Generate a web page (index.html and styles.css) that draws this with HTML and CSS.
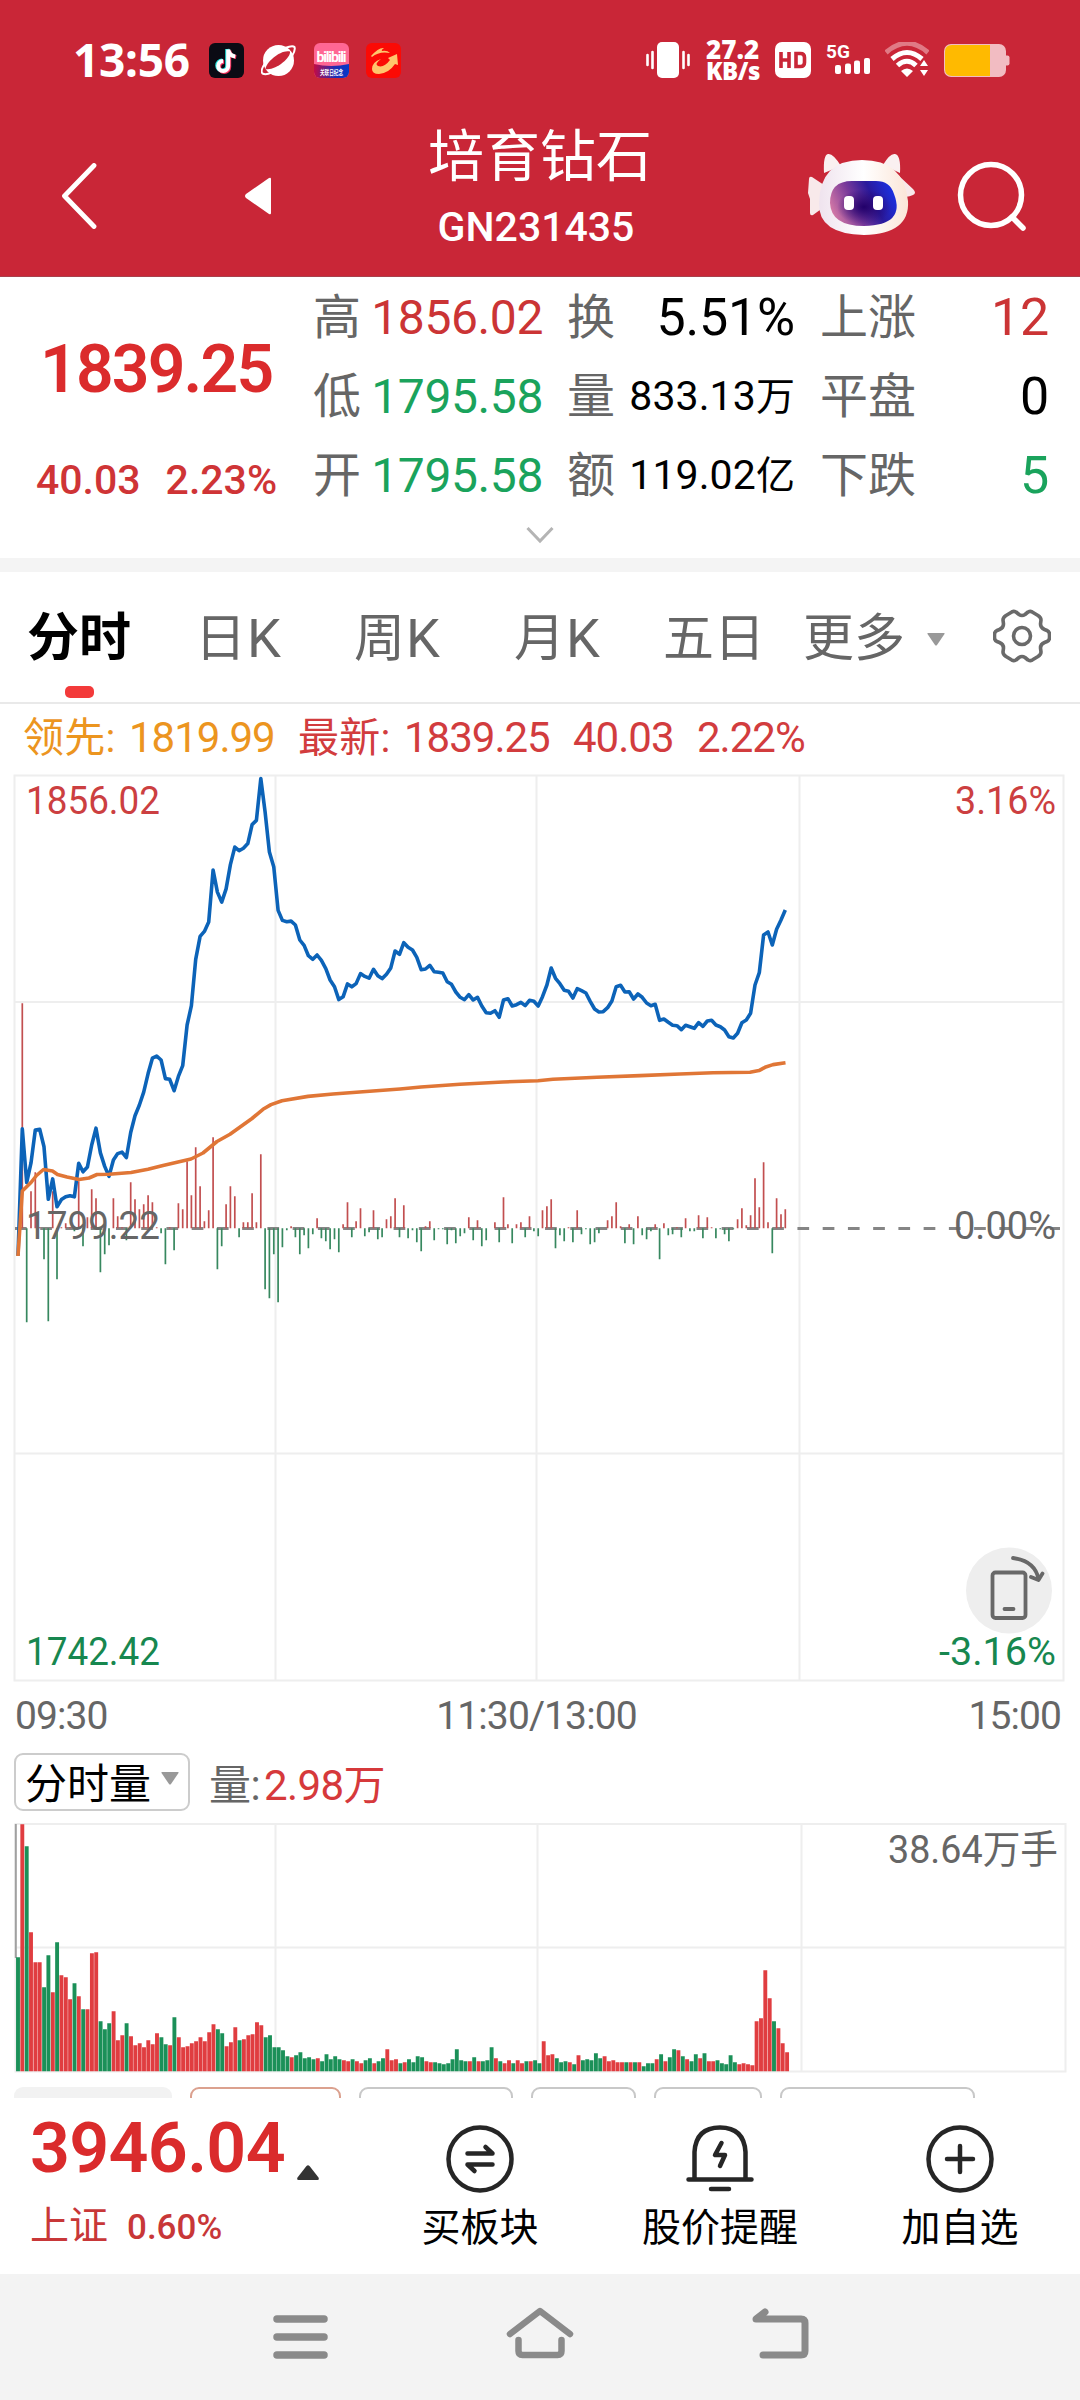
FILE: index.html
```html
<!DOCTYPE html>
<html lang="zh-CN">
<head>
<meta charset="utf-8">
<title>培育钻石 GN231435</title>
<link rel="stylesheet" href="styles.css">
</head>
<body>
<header class="header">
  <div class="status">
    <div class="status-left">
      <span class="clock">13:56</span>
      <svg class="app" viewBox="0 0 35 35"><rect width="35" height="35" rx="6" fill="#0b0b14"/><g fill="none" stroke-width="4"><path d="M18.2 6v16.5a5 5 0 1 1-5-5M18.2 6c.6 4 3.200 6.500 7 7" stroke="#25e5df"/><path d="M20.200 7.500v16.500a5 5 0 1 1-5-5M20.200 7.500c.6 4 3.200 6 7 6.500" stroke="#f5315c"/><path d="M19.200 6.500v16.500a5 5 0 1 1-5-5M19.200 6.500c.6 4 3.200 6.500 7 7" stroke="#fff"/></g></svg>
      <svg class="app" viewBox="0 0 35 35"><circle cx="17.500" cy="17.500" r="15.500" fill="#fff"/><path d="M4.500 26C5 19 20 6 29 8.500C30 15 14 28 4.500 26z" fill="#c92637"/><path d="M3.500 21C1 25 0 29 1.500 30.500c3 1.500 6 .5 9-1M24 5c4-1.500 8-2.500 9.500-1 1 3-.5 6-2.500 9" fill="none" stroke="#fff" stroke-width="2"/></svg>
      <svg class="app" viewBox="0 0 35 35"><defs><linearGradient id="bl"><stop stop-color="#c40b45"/><stop offset=".6" stop-color="#1d2eb5"/><stop offset="1" stop-color="#0738c8"/></linearGradient><clipPath id="bc"><rect width="35" height="35" rx="6"/></clipPath></defs><g clip-path="url(#bc)"><path d="M0 0h35v35H0z" fill="#ff6794"/><path d="M0 21q17 4 35 0v14H0z" fill="url(#bl)"/><text x="2.500" y="19" class="bili" textLength="30">bilibili</text><text x="6" y="31.500" class="bili-sub" textLength="23" lengthAdjust="spacingAndGlyphs">关联日纪念</text></g></svg>
      <svg class="app" viewBox="0 0 35 35"><rect width="35" height="35" rx="6" fill="#fb0a05"/><path d="M5 13q8-9 13-8-3 2-2 3 5-1 8 2-11-2-18 4zM31 11l-9 4 2 2q-6 8-12 6-4-2 3-7-9 3-9 10 0 5 7 5 10-1 16-10l3 1z" fill="#ffc56c"/></svg>
    </div>
    <div class="status-right">
      <svg width="44" height="36" viewBox="0 0 44 36"><rect x="11" width="22" height="36" rx="5" fill="#fff"/><path d="M1.500 13v10M6.500 10v16M37.500 10v16M42.500 13v10" stroke="#fff" stroke-width="2.600" stroke-linecap="round"/></svg>
      <span class="speed"><b>27.2</b><b>KB/s</b></span>
      <svg width="36" height="36" viewBox="0 0 36 36"><rect width="36" height="36" rx="7" fill="#fff"/><path d="M6 10v16M14 10v16M6 18h8M21 11.500h4.500q4 0 4 4v5q0 4-4 4H21z" fill="none" stroke="#c92637" stroke-width="3.600"/></svg>
      <svg class="signal" width="44" height="36" viewBox="0 0 44 36"><text x="0" y="16" class="five-g">5G</text><g fill="#fff"><rect x="9" y="23" width="6" height="9" rx="2"/><rect x="19" y="21.500" width="6" height="10.500" rx="2"/><rect x="28" y="18.500" width="6" height="13.500" rx="2"/><rect x="38" y="16" width="6" height="16" rx="2"/></g></svg>
      <svg width="44" height="36" viewBox="0 0 44 36"><g fill="none" stroke="#fff" stroke-width="5"><path d="M1 10.500Q22-8 43 10.500" stroke="#e07a85"/><path d="M7 17Q22 4 37 17"/><path d="M12.500 23.500Q22 15 31 23.500"/></g><path d="M16 29q6-5 12 0l-6 6zM35 24h8l-4-6zM35 28h8l-4 6z" fill="#fff"/></svg>
      <svg width="66" height="33" viewBox="0 0 66 33"><rect width="62" height="33" rx="7" fill="#f2bcc2"/><path d="M61 11.500h2.500q2 0 2 2v6q0 2-2 2H61z" fill="#f2bcc2"/><path d="M46 1H8Q1 1 1 8v17q0 7 7 7h38z" fill="#ffba00"/></svg>
    </div>
  </div>
  <div class="titlebar">
    <svg class="back" width="36" height="66" viewBox="0 0 36 66"><path d="M33 2.500L3.500 33 33 63.500" fill="none" stroke="#fff" stroke-width="4.800" stroke-linecap="round" stroke-linejoin="round"/></svg>
    <svg class="prev" width="28" height="38" viewBox="0 0 28 38"><path d="M27 2v34q0 2-2 1L2 21q-2-2 0-4L25 1q2-1 2 1z" fill="#fff"/></svg>
    <div class="title"><h1>培育钻石</h1><p>GN231435</p></div>
    <svg class="robot" width="108" height="84" viewBox="0 0 108 84">
      <defs><linearGradient id="face" x1="0" y1=".6" x2="1" y2=".3"><stop stop-color="#d479a6"/><stop offset=".35" stop-color="#7a3a9a"/><stop offset=".65" stop-color="#2a1a9c"/><stop offset="1" stop-color="#1a32e6"/></linearGradient><radialGradient id="deep"><stop stop-color="#22006a"/><stop offset="1" stop-color="#22006a" stop-opacity="0"/></radialGradient><linearGradient id="skin"><stop stop-color="#efe3ee"/><stop offset=".5" stop-color="#fff"/><stop offset="1" stop-color="#fbe6d8"/></linearGradient></defs>
      <path d="M1 26q0-3 3-2l12 8v22L5 62q-3 1-3-2V46l-2-6zM90 22l15 14q4 4 0 6-6 3-10 1z" fill="#f8e9ea"/>
      <path d="M16 20Q15 2 20 1q5-1 13 12zM92 20q1-18-5-19-5-1-12 11z" fill="#faf0f0"/>
      <path d="M11 50Q12 7 54 7q42 0 46 41 2 33-44 34Q10 81 11 50z" fill="url(#skin)"/>
      <path d="M22 50q0-22 22-22h24q14 0 18 13 12 31-30 32-33 0-34-23z" fill="url(#face)"/><ellipse cx="56" cy="54" rx="27" ry="18" fill="url(#deep)"/>
      <rect x="36" y="43" width="10" height="14" rx="4" fill="#fff"/><rect x="65" y="43" width="10" height="14" rx="4" fill="#fff"/>
    </svg>
    <svg class="search" width="70" height="70" viewBox="0 0 70 70"><g fill="none" stroke="#fff" stroke-width="5.500" stroke-linecap="round"><circle cx="34" cy="34" r="30.500"/><path d="M55 56l11 11"/></g></svg>
  </div>
</header>

<section class="quote">
  <div class="quote-main"><strong>1839.25</strong><p><span>40.03</span><span>2.23%</span></p></div>
  <dl class="col col-a"><dt>高</dt><dd class="up">1856.02</dd><dt>低</dt><dd class="down">1795.58</dd><dt>开</dt><dd class="down">1795.58</dd></dl>
  <dl class="col col-b"><dt>换</dt><dd class="big">5.51%</dd><dt>量</dt><dd class="small">833.13<i>万</i></dd><dt>额</dt><dd class="small">119.02<i>亿</i></dd></dl>
  <dl class="col col-c"><dt>上涨</dt><dd class="big up">12</dd><dt>平盘</dt><dd class="big">0</dd><dt>下跌</dt><dd class="big down">5</dd></dl>
  <svg class="expand" width="28" height="18" viewBox="0 0 28 18"><path d="M1.500 2L14 15 26.500 2" fill="none" stroke="#b4b4b4" stroke-width="3"/></svg>
</section>

<nav class="tabs">
  <span class="tab active">分时</span><span class="tab">日<b>K</b></span><span class="tab">周<b>K</b></span><span class="tab">月<b>K</b></span><span class="tab">五日</span>
  <span class="tab">更多<svg width="18" height="13" viewBox="0 0 18 13"><path d="M1 0h16q1 0 .5 1L10 12q-1 1-2 0L.5 1Q0 0 1 0z" fill="#999"/></svg></span>
  <svg class="gear" width="58" height="54" viewBox="0 0 58 54"><g fill="none" stroke="#6a6a6a" stroke-width="3.600" stroke-linejoin="round"><path d="M18 3.500Q20 1.500 23 3l3 2.500q3 2 6 0L35 3q3-1.500 5 .5l5 3q3 2 3 4.500l-.5 4q0 4 4 5.500l2.500 1q2.500 1 2.500 4v3q0 3-2.500 4l-2.500 1q-4 1.500-4 5.500l.5 4q0 2.500-3 4.500l-5 3q-2 2-5 .5l-3-2.500q-3-2-6 0L23 51q-3 1.500-5-.5l-5-3q-3-2-3-4.500l.5-4q0-4-4-5.500L4 32.500q-2.500-1-2.500-4v-3q0-3 2.500-4l2.500-1q4-1.500 4-5.500L10 11q0-2.500 3-4.500z"/><circle cx="29" cy="27" r="8.500"/></g></svg>
</nav>

<p class="legend"><span class="lead"><i>领先:</i>1819.99</span><span class="latest"><i>最新:</i>1839.25</span><span class="diff">40.03</span><span>2.22%</span></p>

<section class="price-chart">
  <svg id="price" width="1080" height="908" viewBox="0 774 1080 908">
    <path class="grid" d="M14.500 775.500H1063.500V1680.500H14.500zM14.500 1002H1063.500M14.500 1453.500H1063.500M275.500 775.500V1680.500M536.500 775.500V1680.500M799.500 775.500V1680.500"/>
    <path d="M15 1228.500H1060" stroke="#858585" stroke-width="3" stroke-dasharray="11.700 13.540"/>
    <path id="flow-up" stroke="#c24f50" stroke-width="1.700"/>
    <path id="flow-down" stroke="#37885f" stroke-width="1.700"/>
    <g class="axis">
      <text class="red" x="26" y="814" textLength="134" lengthAdjust="spacingAndGlyphs">1856.02</text>
      <text x="26" y="1239" textLength="134" lengthAdjust="spacingAndGlyphs">1799.22</text>
      <text class="green" x="26" y="1665" textLength="134" lengthAdjust="spacingAndGlyphs">1742.42</text>
      <text class="red" x="955" y="814" textLength="101" lengthAdjust="spacingAndGlyphs">3.16%</text>
      <text x="954" y="1239" textLength="102" lengthAdjust="spacingAndGlyphs">0.00%</text>
      <text class="green" x="939" y="1665" textLength="117" lengthAdjust="spacingAndGlyphs">-3.16%</text>
    </g>
    <path id="line" fill="none" stroke="#0c63b8" stroke-width="3.600" stroke-linejoin="round"/>
    <path id="avg" fill="none" stroke="#e07636" stroke-width="3.600" stroke-linejoin="round"/>
    <g fill="none" stroke="#686868" stroke-width="3.800" stroke-linecap="round" stroke-linejoin="round"><circle cx="1009" cy="1590.500" r="43" fill="#eee" stroke="none"/><rect x="992.500" y="1572.500" width="33" height="45.500" rx="3"/><path d="M1004.500 1609h9M1013 1558q22 3 25.500 21M1031 1577l7.500 3 4-6.500"/></g>
  </svg>
</section>
<div class="times"><span>09:30</span><span>11:30/13:00</span><span>15:00</span></div>
<div class="indicator">
  <span class="select"><em>分时量</em><svg width="18" height="13" viewBox="0 0 18 13"><path d="M1 0h16q1 0 .5 1L10 12q-1 1-2 0L.5 1Q0 0 1 0z" fill="#999"/></svg></span>
  <span class="vol"><i>量:</i>2.98万</span>
</div>
<section class="volume-chart">
  <svg width="1080" height="250" viewBox="0 1823 1080 250">
    <path class="grid" d="M15.500 1824H1065.500V2071.500H15.500zM15.500 1947.500H1065.500M275.500 1824V2071.500M537.500 1824V2071.500M801.500 1824V2071.500"/>
    <path d="M15.800 1824V1958" stroke="#a0a0a0" stroke-width="2"/>
    <path id="vol-up" stroke="#e03d40" stroke-width="3.900"/>
    <path id="vol-down" stroke="#1b9058" stroke-width="3.900"/>
    <text class="unit" x="888" y="1863" textLength="170" lengthAdjust="spacingAndGlyphs">38.64万手</text>
  </svg>
</section>
<div class="chips"><span class="c1"></span><span class="c2"></span><span class="c3"></span><span class="c4"></span><span class="c5"></span><span class="c6"></span></div>

<footer class="actions">
  <div class="index"><strong>3946.04</strong><svg width="22" height="15" viewBox="0 0 22 15"><path d="M9.500 1q1.500-1.500 3 0l9 11.500q1 2.500-1 2.500h-19Q-.5 15 .5 12.500z" fill="#333"/></svg><p><span>上证</span>0.60%</p></div>
  <div class="action"><svg width="68" height="68" viewBox="0 0 68 68"><g fill="none" stroke="#262626" stroke-width="4.500" stroke-linecap="round" stroke-linejoin="round"><circle cx="34" cy="34" r="31.500"/><path d="M21.500 28.500h25l-7-6.500M46.500 39.500h-25l7 6.500"/></g></svg>买板块</div>
  <div class="action"><svg width="68" height="68" viewBox="0 0 68 68"><g fill="none" stroke="#262626" stroke-width="4.500" stroke-linecap="round" stroke-linejoin="round"><path d="M8.500 54V27Q10 2.500 34 2.500T59.500 27v27M2.500 54.500h63M25 64h18"/><path d="M35.500 18l-6.500 12h10l-5 11" /></g></svg>股价提醒</div>
  <div class="action"><svg width="68" height="68" viewBox="0 0 68 68"><g fill="none" stroke="#262626" stroke-width="4.500" stroke-linecap="round"><circle cx="34" cy="34" r="31.500"/><path d="M21 34h26M34 21v26"/></g></svg>加自选</div>
</footer>
<nav class="sysnav">
  <svg width="72" height="60" viewBox="0 0 72 60"><path d="M13 15h47M13 33h47M13 51h47" stroke="#8a8a8a" stroke-width="7.500" stroke-linecap="round"/></svg>
  <svg width="72" height="60" viewBox="0 0 72 60"><g fill="none" stroke="#8a8a8a" stroke-width="6.500" stroke-linecap="round" stroke-linejoin="round"><path d="M6 30L36 7l30 23"/><path d="M14.500 36v11q0 4 4 4h35q4 0 4-4V36"/></g></svg>
  <svg width="72" height="60" viewBox="0 0 72 60"><path d="M19 51h38q4 0 4-4V19q0-4-4-4H12l9-7" fill="none" stroke="#8a8a8a" stroke-width="7" stroke-linecap="round" stroke-linejoin="round"/></svg>
</nav>
<script src="chart.js"></script>
</body>
</html>
```
FILE: styles.css
```css
* { box-sizing: border-box; margin: 0; padding: 0; }
body { width: 1080px; height: 2400px; background: #fff; overflow: hidden; color: #000; font-family: Roboto, "Noto Sans CJK SC", sans-serif; }
svg { display: block; flex: none; }
i, em { font-style: normal; }

.header { height: 277px; background: #c92637; color: #fff; border-bottom: 1px solid #a8404c; }
.status { height: 122px; display: flex; justify-content: space-between; padding: 30px 70px 32px 73px; }
.status-left, .status-right { display: flex; align-items: center; }
.status-left { gap: 17.500px; }
.clock { font: 700 46px/60px "Noto Sans", sans-serif; width: 118px; letter-spacing: -.3px; margin-top: -3px; }
.app { width: 35px; height: 35px; }
.bili { font: 700 14px Roboto, sans-serif; fill: #fff; }
.bili-sub { font: 700 7px "Noto Sans CJK SC", sans-serif; fill: #fff; }
.signal { overflow: visible; }
.five-g { font: 700 19px Roboto, sans-serif; fill: #fff; }
.status-right { gap: 15px; }
.speed { display: flex; flex-direction: column; width: 54px; margin-left: 1px; font: 700 24px/22px "Noto Sans", sans-serif; white-space: nowrap; letter-spacing: -.4px; }
.speed b:first-child { font-size: 26px; letter-spacing: 0; }

.titlebar { height: 154px; display: flex; align-items: flex-start; }
.back { margin: 41px 0 0 61px; }
.prev { margin: 55px 0 0 147px; }
.title { width: 224px; margin: 0 0 0 156px; text-align: center; white-space: nowrap; }
.title h1 { font-size: 56px; font-weight: 400; line-height: 66px; margin-top: 2px; }
.title p { font-size: 41px; font-weight: 500; line-height: 44px; margin-top: 15px; margin-right: 8px; }
.robot { margin: 31px 0 0 156px; }
.search { margin: 39px 0 0 41px; }

.quote { position: relative; height: 281px; display: flex; padding-top: 1px; }
.quote-main { width: 313px; color: #db2b2c; white-space: nowrap; }
.quote-main strong { display: block; font-size: 66px; font-weight: 600; line-height: 80px; margin: 52px 0 0 40px; letter-spacing: -1.800px; }
.quote-main p { display: flex; gap: 25px; margin: 50px 0 0 36px; font-size: 41px; font-weight: 500; line-height: 40px; color: #cf3436; }
.col { display: grid; grid-template-columns: auto 1fr; grid-auto-rows: 79px; height: 237px; line-height: 79px; font-size: 48px; white-space: nowrap; }
.col dt { color: #666; }
.col dd { text-align: right; letter-spacing: -.4px; }
.col dd.big { font-size: 52px; letter-spacing: -.2px; }
.col dd.small { font-size: 41px; letter-spacing: .1px; }
.col dd i { font-size: 39px; }
.col-a { width: 230px; }
.col-b { width: 228px; margin-left: 24px; }
.col-c { width: 229px; margin-left: 25px; }
.col .up { color: #cb3435; }
.col .down { color: #1aa35c; }
.expand { position: absolute; left: 526px; top: 249px; }

.tabs { height: 146px; border-top: 14px solid #f4f4f4; border-bottom: 2px solid #e9e9e9; display: grid; grid-template-columns: 169px 157px 160px 149px 140px 190px 58px; padding-left: 28px; color: #666; font-size: 51px; line-height: 134px; }
.tab { position: relative; display: flex; align-items: center; white-space: nowrap; height: 134px; }
.tab b { font-size: 54px; font-weight: 400; margin-left: 1px; }
.tab svg { margin: 0 0 0 22px; }
.tab:nth-child(2) { margin-left: -2px; }
.tab.active { color: #000; font-weight: 700; font-size: 52px; margin-left: -1px; line-height: 136px; }
.tab.active::after { content: ""; position: absolute; left: 38px; top: 114px; width: 29px; height: 12px; border-radius: 5px; background: #f33a3a; }
.gear { margin-top: 37px; }

.legend { height: 70px; display: flex; padding-left: 23px; font-size: 42px; line-height: 67px; color: #d23c3e; white-space: nowrap; letter-spacing: -1px; }
.legend i { display: inline-block; width: 106px; font-size: 41px; letter-spacing: .3px; }
.legend .lead { color: #ec951f; width: 275px; }
.legend .latest { width: 275px; }
.legend .diff { width: 124px; }

.price-chart { height: 908px; }
.grid { fill: none; stroke: #eee; stroke-width: 2; }
.axis text, .unit { font: 400 39px Roboto, "Noto Sans CJK SC", sans-serif; fill: #666; }
.axis .red { fill: #cc3f41; }
.axis .green { fill: #17874f; }
.times { height: 71px; display: grid; grid-template-columns: 1fr auto 1fr; padding: 1px 19px 0 15px; font-size: 39px; line-height: 66px; color: #666; letter-spacing: -.9px; }
.times span:nth-child(2) { margin-left: -3px; }
.times span:last-child { text-align: right; }
.indicator { height: 70px; display: flex; padding-left: 14px; font-size: 42px; line-height: 65px; white-space: nowrap; }
.select { display: flex; align-items: center; width: 176px; height: 58px; padding-left: 9px; border: 2px solid #ccc; border-radius: 9px; }
.select em { padding-top: 4px; }
.select svg { margin: -8px 0 0 10px; }
.vol { margin-left: 19px; color: #d6393b; letter-spacing: -.6px; }
.vol i { color: #666; display: inline-block; width: 55px; }

.volume-chart { height: 250px; }
.chips { height: 25px; padding-top: 14px; display: flex; overflow: hidden; }
.chips span { height: 40px; border: 2px solid #c8c8c8; border-radius: 9px; flex: none; }
.chips .c1 { width: 158px; margin-left: 14px; background: #f2f2f2; border: 0; }
.chips .c2 { width: 151px; margin-left: 18px; border-color: #dba18f; }
.chips .c3 { width: 154px; margin-left: 18px; }
.chips .c4 { width: 105px; margin-left: 18px; }
.chips .c5 { width: 108px; margin-left: 18px; }
.chips .c6 { width: 195px; margin-left: 18px; }

.actions { height: 176px; display: flex; }
.index { width: 360px; padding-left: 30px; display: grid; grid-template-columns: 267px 22px; align-content: start; color: #da2b2c; }
.index strong { font-size: 70px; font-weight: 600; line-height: 80px; letter-spacing: -.7px; margin-top: 10px; }
.index svg { margin-top: 67px; }
.index p { grid-column: 1 / 3; font-size: 35px; font-weight: 500; line-height: 44px; margin-top: 16px; color: #c83738; }
.index p span { display: inline-block; width: 97px; font-size: 39px; font-weight: 400; }
.action { width: 240px; display: flex; flex-direction: column; align-items: center; padding-top: 27px; font-size: 39px; line-height: 71px; }
.sysnav { height: 126px; background: #f3f3f3; display: flex; justify-content: center; gap: 168px; padding-top: 30px; }
```
FILE: chart.js
```js
// One entry per trading minute.
const STEP = 4.335, VOLUME_STEP = 4.345, X0 = 18;
const x = (i, step = STEP) => X0 + i * step;

// Price line, chart y coordinates.
const morning = [1360,1005,1155,1100,1008,1006,1055,1202,1145,1223,1203,1195,1192,1195,1101,1125,1112,1050,1003,1072,1110,1138,1092,1074,1070,1085,1015,968,938,902,850,807,801,812,864,866,898,858,828,714,660,530,466,452,426,280,342,370,333,265,216,226,219,206,153,141,24,118,230,272,393,421,425,423,434,476,491,520,530,518,533,556,588,607,643,635,599,607,598,570,578,583,558,576,584,572,554].map(v => 770 + v / 2.8);
const later = [153,163,128,142,150,172,209,207,196,215,217,219,245,253,276,292,299,284,300,292,318,338,340,332,352,300,296,318,314,307,317,301,304,318,290,255,204,235,251,271,274,294,266,272,279,304,327,336,335,323,303,260,256,276,275,297,282,292,309,317,313,361,357,367,376,377,389,376,380,385,368,379,363,361,375,380,390,410,414,400,368,360,340,255,218,105,96,135,88,60,30].map(v => 900 + v / 3);
const price = morning.concat(later);

// Average line, [x, y].
const avg = [[18,1256],[22.300,1191],[31,1182.500],[36.500,1175.500],[43.500,1169.500],[52.500,1171],[57.500,1174.500],[67,1177],[79,1179.500],[89,1178],[97,1174.500],[109,1174.300],[131,1172.500],[148,1169.300],[163,1165.400],[191,1159],[203,1153],[217,1141.500],[230,1134.300],[252,1118.500],[263,1109.300],[271,1104.600],[282,1100.700],[308,1096.400],[333,1094],[373,1091],[400,1089],[421,1087],[460,1084.300],[503,1082],[538,1080.700],[553,1079.300],[597,1077.300],[640,1075.600],[680,1074],[713,1072.700],[750,1072.300],[759,1070.600],[765,1067.300],[773,1064.600],[785.500,1062.700]];

// Capital flow, signed height around the zero line.
const flow = [0,225,-94,37,56,1,-31,-93,37,-51,1,5,1,-3,47,-18,11,39,30,-44,-26,-17,30,12,1,-12,46,29,19,24,33,26,1,-5,-36,1,-22,25,19,67,33,81,42,7,18,91,-41,-18,24,42,32,-9,6,6,35,6,74,-61,-70,-26,-74,-19,-2,2,-9,-26,-7,-20,-6,10,-10,-13,-21,-11,-24,4,26,-9,7,20,-8,-4,18,-11,-9,9,12,30,-9,23,-10,-2,-14,-23,2,7,-12,-1,-1,-16,-2,-15,-8,-5,11,-12,8,-18,-12,0,6,-14,31,4,-15,4,6,-9,12,-3,-8,18,22,29,-20,-7,-13,1,-14,18,-6,-1,-16,-14,-5,0,8,12,26,2,-15,4,-16,12,-7,-11,-3,4,-31,5,-7,-6,1,-9,10,-3,-3,13,-10,11,1,-10,-1,-6,-13,-1,9,20,3,13,50,21,66,6,-25,30,14,19];

// Volume: positive for rising minutes, negative for falling ones.
const volume = [-114,247,-225,139,109,109,-84,-116,79,-129,96,94,72,-88,75,-62,62,118,119,-50,-42,-48,60,31,36,-48,35,26,28,24,31,27,38,-34,-27,26,-54,34,24,25,28,30,34,30,39,47,-42,-38,25,29,44,-31,32,36,37,49,46,-34,-36,-24,-24,-21,-15,14,-16,-19,-13,-14,-12,13,-10,-17,-12,-15,-12,11,10,-12,10,8,-11,-13,8,-10,-13,22,11,12,-8,9,-12,-9,-15,-14,10,9,-9,-8,-7,-8,-12,-22,-11,-10,10,-14,10,-10,-11,-24,13,-10,8,11,-8,11,8,-10,10,-11,-8,30,16,17,-13,-9,-10,9,-7,16,-11,-12,-11,-18,-13,15,10,11,9,9,-9,9,-9,9,-5,-8,-8,12,-17,10,-14,-22,21,-15,12,-10,-17,13,-18,10,10,-11,-8,-7,-16,-9,7,8,7,6,50,53,101,73,-50,43,28,19];

const set = (id, d) => document.getElementById(id).setAttribute('d', d);
const poly = pts => 'M' + pts.map(p => p[0].toFixed(1) + ' ' + p[1].toFixed(1)).join('L');
const bars = (data, base, sign, mirror, step) => data.map((v, i) =>
  v * sign > 0 ? `M${x(i, step).toFixed(1)} ${base}v${mirror ? -Math.abs(v) : -v}` : '').join('');

set('line', poly(price.map((y, i) => [x(i), y])));
set('avg', poly(avg));
set('flow-up', bars(flow, 1228.3, 1, false, STEP));
set('flow-down', bars(flow, 1228.3, -1, false, STEP));
set('vol-up', bars(volume, 2071.3, 1, true, VOLUME_STEP));
set('vol-down', bars(volume, 2071.3, -1, true, VOLUME_STEP));
```
